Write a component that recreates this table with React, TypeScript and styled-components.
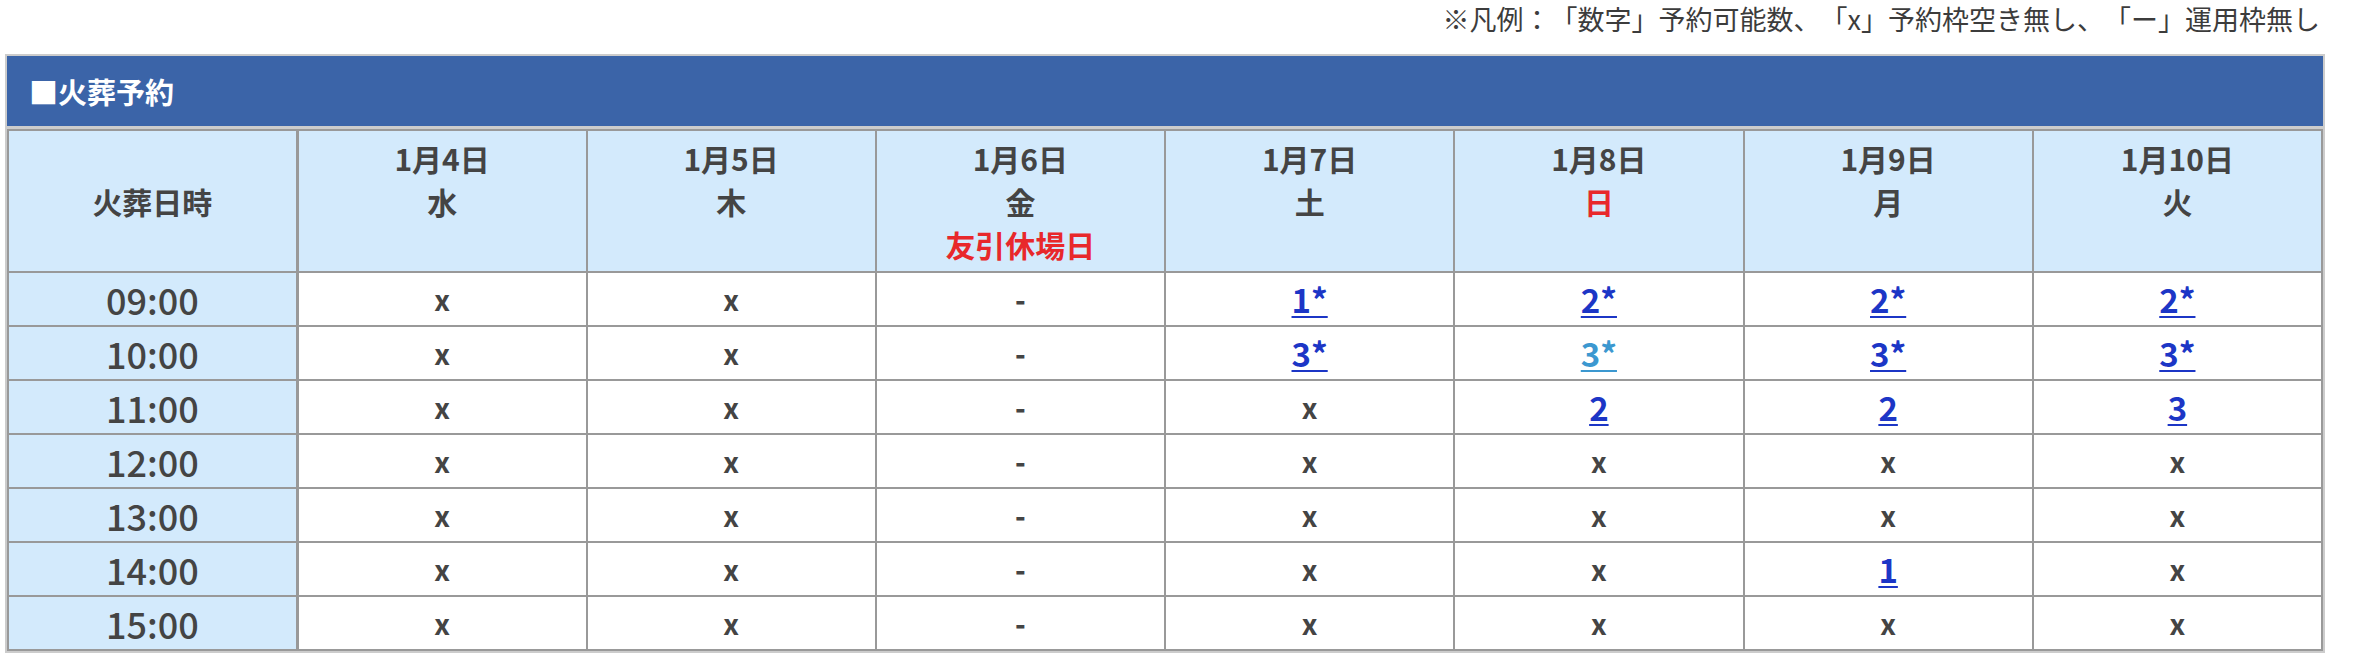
import styled, { createGlobalStyle } from 'styled-components';

const GlobalStyle = createGlobalStyle`
  html, body {
    margin: 0;
    padding: 0;
    background: #ffffff;
  }
  body {
    font-family: "Noto Sans CJK JP", "Noto Sans", sans-serif;
    color: #444444;
    text-spacing-trim: space-all;
  }
`;

const Page = styled.div`
  width: 2320px;
  margin-left: 5px;
`;

const Legend = styled.p`
  margin: 0 0 16px;
  padding-right: 5px;
  text-align: right;
  font-size: 27px;
  line-height: 38px;
  color: #3c3c3c;
  text-spacing-trim: space-all;
`;

const Frame = styled.div`
  display: flex;
  flex-direction: column;
  gap: 3px;
  border: 2px solid #cccccc;
  background: #cccccc;
`;

const TitleBar = styled.h2`
  margin: 0;
  padding-left: 22px;
  height: 70px;
  line-height: 70px;
  background: #3b64a8;
  color: #ffffff;
  font-size: 29px;
  font-weight: 700;
`;

const Table = styled.table`
  width: 100%;
  table-layout: fixed;
  border-collapse: collapse;
  border: 2px solid #999999;
  background: #ffffff;
`;

const HeadCell = styled.th<{ $first?: boolean }>`
  height: 140px;
  padding: 0;
  border: 2px solid #999999;
  border-right-width: ${(p) => (p.$first ? '3px' : '2px')};
  background: #d3eafc;
  font-size: 30px;
  font-weight: 700;
  line-height: 43px;
  color: #444444;
  vertical-align: middle;
`;

const DateLine = styled.span<{ $red?: boolean }>`
  display: block;
  height: 43px;
  color: ${(p) => (p.$red ? '#e8282b' : '#444444')};
`;

const TimeCell = styled.td`
  height: 52px;
  padding: 0;
  border: 2px solid #999999;
  border-right-width: 3px;
  background: #d3eafc;
  text-align: center;
  font-size: 36px;
  font-weight: 500;
  color: #444444;
`;

const DataCell = styled.td`
  height: 52px;
  padding: 0;
  border: 2px solid #999999;
  text-align: center;
  font-size: 28px;
  font-weight: 700;
  color: #444444;
`;

const Dash = styled.span`
  font-weight: 900;
`;

const ReserveLink = styled.a<{ $visited?: boolean }>`
  font-size: 33px;
  font-weight: 700;
  color: ${(p) => (p.$visited ? '#3c98d0' : '#1c36c6')};
  text-decoration: underline;
  text-decoration-thickness: 2px;
  text-underline-offset: 3px;
`;

interface Day {
  date: string;
  week: string;
  red?: boolean;
  note?: string;
}

const days: Day[] = [
  { date: '1月4日', week: '水' },
  { date: '1月5日', week: '木' },
  { date: '1月6日', week: '金', note: '友引休場日' },
  { date: '1月7日', week: '土' },
  { date: '1月8日', week: '日', red: true },
  { date: '1月9日', week: '月' },
  { date: '1月10日', week: '火' },
];

const rows: { time: string; slots: string[] }[] = [
  { time: '09:00', slots: ['x', 'x', '-', '1*', '2*', '2*', '2*'] },
  { time: '10:00', slots: ['x', 'x', '-', '3*', '3*v', '3*', '3*'] },
  { time: '11:00', slots: ['x', 'x', '-', 'x', '2', '2', '3'] },
  { time: '12:00', slots: ['x', 'x', '-', 'x', 'x', 'x', 'x'] },
  { time: '13:00', slots: ['x', 'x', '-', 'x', 'x', 'x', 'x'] },
  { time: '14:00', slots: ['x', 'x', '-', 'x', 'x', '1', 'x'] },
  { time: '15:00', slots: ['x', 'x', '-', 'x', 'x', 'x', 'x'] },
];

function Slot({ value }: { value: string }) {
  if (value === 'x') return <>x</>;
  if (value === '-') return <Dash>-</Dash>;
  const visited = value.endsWith('v');
  return (
    <ReserveLink href="#" $visited={visited}>
      {visited ? value.slice(0, -1) : value}
    </ReserveLink>
  );
}

export default function App() {
  return (
    <Page>
      <GlobalStyle />
      <Legend>※凡例：「数字」予約可能数、「x」予約枠空き無し、「ー」運用枠無し</Legend>
      <Frame>
        <TitleBar>■火葬予約</TitleBar>
        <Table>
          <thead>
            <tr>
              <HeadCell $first>火葬日時</HeadCell>
              {days.map((day) => (
                <HeadCell key={day.date}>
                  <DateLine>{day.date}</DateLine>
                  <DateLine $red={day.red}>{day.week}</DateLine>
                  <DateLine $red>{day.note ?? ''}</DateLine>
                </HeadCell>
              ))}
            </tr>
          </thead>
          <tbody>
            {rows.map((row) => (
              <tr key={row.time}>
                <TimeCell>{row.time}</TimeCell>
                {row.slots.map((s, i) => (
                  <DataCell key={i}>
                    <Slot value={s} />
                  </DataCell>
                ))}
              </tr>
            ))}
          </tbody>
        </Table>
      </Frame>
    </Page>
  );
}
